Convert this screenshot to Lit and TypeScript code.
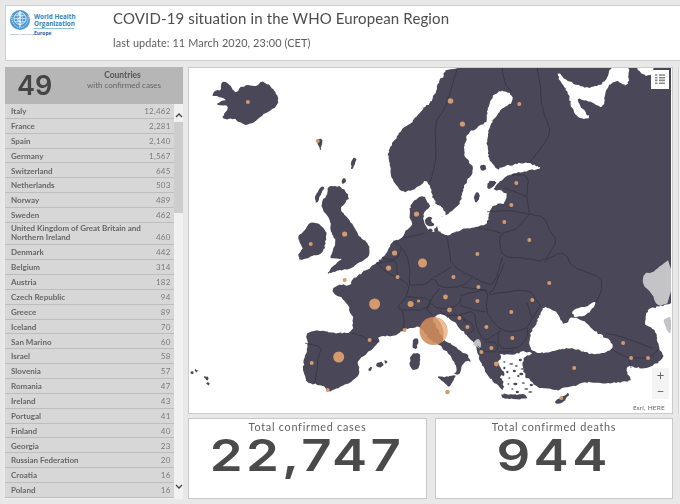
import { LitElement, html, css, svg } from "lit";
import { customElement } from "lit/decorators.js";

const ROWS: [string, string][] = [
  ["Italy", "12,462"], ["France", "2,281"], ["Spain", "2,140"], ["Germany", "1,567"],
  ["Switzerland", "645"], ["Netherlands", "503"], ["Norway", "489"], ["Sweden", "462"],
  ["United Kingdom of Great Britain and Northern Ireland", "460"], ["Denmark", "442"],
  ["Belgium", "314"], ["Austria", "182"], ["Czech Republic", "94"], ["Greece", "89"],
  ["Iceland", "70"], ["San Marino", "60"], ["Israel", "58"], ["Slovenia", "57"],
  ["Romania", "47"], ["Ireland", "43"], ["Portugal", "41"], ["Finland", "40"],
  ["Georgia", "23"], ["Russian Federation", "20"], ["Croatia", "16"], ["Poland", "16"],
];

type Pt = [number, number];

function parse(d: string): Pt[][] {
  return d
    .split("M")
    .filter((s) => s.trim())
    .map((s) => {
      const n = s.replace(/[LZ]/g, " ").trim().split(/[\s,]+/).map(Number);
      const pts: Pt[] = [];
      for (let i = 0; i + 1 < n.length; i += 2) pts.push([n[i], n[i + 1]]);
      return pts;
    });
}

function chaikin(pts: Pt[], closed: boolean): Pt[] {
  const out: Pt[] = [];
  const len = pts.length;
  if (!closed) out.push(pts[0]);
  for (let i = 0; i < (closed ? len : len - 1); i++) {
    const a = pts[i];
    const b = pts[(i + 1) % len];
    out.push([a[0] * 0.75 + b[0] * 0.25, a[1] * 0.75 + b[1] * 0.25]);
    out.push([a[0] * 0.25 + b[0] * 0.75, a[1] * 0.25 + b[1] * 0.75]);
  }
  if (!closed) out.push(pts[len - 1]);
  return out;
}

let seed = 12345;
function rnd() {
  seed = (seed * 16807) % 2147483647;
  return seed / 2147483647 - 0.5;
}

function rough(d: string, closed: boolean, amp: number, step: number): string {
  return parse(d)
    .map((poly) => {
      if (poly.length < 3) return "";
      const sm = chaikin(poly, closed);
      const out: string[] = [];
      const n = sm.length;
      for (let i = 0; i < (closed ? n : n - 1); i++) {
        const a = sm[i];
        const b = sm[(i + 1) % n];
        const l = Math.hypot(b[0] - a[0], b[1] - a[1]);
        const k = Math.max(1, Math.round(l / step));
        for (let j = 0; j < k; j++) {
          const t = j / k;
          const onEdge = Math.abs(a[0] - 672) < 0.01 || a[1] <= 68.01;
          const m = onEdge ? 0 : amp;
          out.push(
            `${(a[0] + (b[0] - a[0]) * t + rnd() * m).toFixed(1)},${(a[1] + (b[1] - a[1]) * t + rnd() * m).toFixed(1)}`
          );
        }
      }
      if (!closed) out.push(`${sm[n - 1][0]},${sm[n - 1][1]}`);
      return "M" + out.join(" L") + (closed ? "Z" : "");
    })
    .join(" ");
}

const LAND =
  "M447,68 L444,76 440,80 436,92 430,103 424,108 420,113 410,125 404,128 398,135 391,146 388,157 391,168 392,177 397,187 403,192 413,190 420,186 427,180 431,188 433,197 437,203 431,208 428,202 424,195 417,199 412,203 410,211 411,220 413,226 406,231 403,238 394,241 389,249 383,258 377,263 372,267 362,273 352,279 351,286 342,284 333,287 333,293 342,298 347,303 351,312 354,320 352,333 340,333 326,332 313,330 305,335 308,342 306,354 303,368 306,376 307,383 316,384 323,385 328,392 338,388 350,383 357,377 361,372 357,362 366,354 380,342 378,337 388,336 397,335 403,330 413,327 421,327 427,335 433,342 437,343 445,350 452,357 457,367 458,371 454,374 460,376 463,365 467,361 472,362 470,357 462,351 455,347 445,340 438,330 433,319 437,315 443,314 449,318 455,322 462,330 470,338 477,346 479,356 483,366 490,378 497,384 503,391 505,385 500,375 507,377 498,363 503,357 500,354 510,355 520,353 526,351 535,354 525,356 523,362 525,375 532,380 538,388 548,388 557,391 565,388 575,386 580,384 590,382 600,384 617,382 632,382 628,372 628,365 640,368 652,367 665,358 660,348 658,340 657,332 650,327 645,323 647,315 650,308 658,307 672,303 L672,303 672,303 672,200 672,68 672,68 600,68 500,68 Z";
const ISLANDS = [
  "M212,95 L216,90 221,91 222,81 228,83 232,88 236,94 240,87 245,86 250,85 256,87 262,80 266,84 270,85 275,91 278,97 278,104 275,108 268,112 263,115 256,121 248,125 240,123 233,118 223,120 223,115 228,109 226,105 215,105 222,101 227,100 221,97 213,96 Z",
  "M316,140 L320,138 323,140 322,145 320,151 319,146 Z",
  "M351,162 L354,157 357,159 355,165 352,171 Z",
  "M341,181 L345,177 347,181 343,185 Z",
  "M317,194 L322,186 325,187 321,194 317,204 315,197 Z",
  "M328,185 L343,187 350,197 345,204 340,209 344,214 348,218 354,226 360,237 367,242 371,249 368,258 358,263 353,268 343,270 333,272 327,274 332,268 337,263 343,258 335,259 330,258 333,251 337,240 332,235 331,228 330,218 324,212 322,207 322,200 327,197 Z",
  "M298,235 L304,232 309,223 316,222 327,230 326,240 325,248 321,254 310,257 300,261 298,255 303,249 301,245 Z",
  "M415,337 L419,340 417,350 412,347 Z",
  "M411,354 L420,352 421,362 419,370 410,369 Z",
  "M375,365 L381,361 385,365 380,368 Z M384,360 L388,361 386,364 Z M368,370 L372,366 372,371 Z",
  "M436,376 L448,377 457,374 453,382 450,388 444,382 Z",
  "M502,393 L515,395 526,394 528,399 515,399 503,399 Z",
  "M555,401 L563,397 571,392 567,399 562,404 557,404 Z",
  "M190,372 L194,371 193,375 Z M194,369 L198,370 196,373 Z M203,376 L209,377 207,381 Z M206,382 L210,383 208,386 Z",
];
const SEA = [
  "M497,92 L505,91 512,93 514,102 506,107 502,110 495,118 490,127 488,137 488,147 489,155 490,160 497,170 505,166 513,165 522,163 530,163 536,166 543,168 532,170 522,172 510,175 502,180 496,186 493,190 500,190 508,193 506,203 497,204 492,207 489,213 488,224 480,226 470,228 458,231 447,236 440,233 437,223 440,218 447,215 456,208 461,203 463,190 468,180 475,170 470,162 464,153 466,143 467,135 476,128 487,123 488,112 490,102 Z",
  "M438,202 L448,215 440,218 438,226 433,233 427,228 423,220 425,212 430,207 Z",
  "M557,72 L565,78 573,83 582,86 590,88 598,86 604,83 609,76 612,66 629,66 630,76 628,86 622,83 617,80 610,85 607,90 606,98 604,108 598,106 593,102 585,100 577,98 579,104 585,110 591,118 583,119 575,114 572,106 570,96 566,88 561,82 Z",
  "M636,66 L656,66 651,76 644,75 Z",
  "M530,340 L532,331 537,325 540,315 545,306 552,309 558,313 562,322 565,325 573,317 577,318 586,322 597,332 605,337 613,342 613,350 605,353 593,354 583,351 573,348 562,349 553,351 544,353 537,353 530,348 Z",
  "M573,310 L582,307 590,305 598,301 593,309 588,315 580,317 574,316 Z",
];
const DARK_SPECKS = [
  "M474,196 L478,191 481,197 476,204 Z",
  "M436,225 L431,221 433,217 428,217 425,221 428,227 Z",
  "M415,226 L422,223 426,228 420,232 Z",
  "M427,232 L431,228 434,231 430,234 Z",
  "M480,166 L486,164 487,170 482,171 Z",
  "M488,181 L498,181 494,187 488,190 Z",
];
const AEGEAN: Pt[] = [
  [510, 378], [515, 371], [512, 364], [519, 376], [524, 383], [516, 384], [505, 362], [521, 360],
  [531, 392], [508, 372], [523, 369], [528, 377], [513, 389], [518, 392], [527, 389], [505, 368],
  [517, 366], [522, 374], [509, 384], [532, 385],
];
const GRAY = [
  "M672,258 L660,267 653,273 645,273 643,285 653,293 658,307 672,302 Z",
  "M664,320 L668,318 672,316 672,334 668,331 666,325 Z",
  "M473,344 L478,338 482,342 481,349 477,347 Z",
];
const BORDERS = [
  "M458,68 L452,88 445,110 435,123 437,157 434,170 430,183",
  "M503,68 L505,83 513,93",
  "M538,68 L541,85 542,103 546,118 552,132 542,148 530,163",
  "M510,175 L530,175 527,197 530,213",
  "M505,188 L514,191 527,197",
  "M488,212 L510,210 530,214",
  "M530,214 L545,217 550,230 558,241 552,250 545,262 525,258 503,257 500,242 502,233 515,230 520,226 530,214",
  "M502,233 L490,230 478,228",
  "M447,235 L450,250 452,265 473,277 485,283 495,285 503,257",
  "M545,262 L555,255 565,252 573,267 590,273 602,278 603,290 597,302",
  "M505,263 L500,275 495,288 488,295 500,293 523,290 532,292 537,300 541,306",
  "M488,295 L487,312 494,322 502,330 515,332 528,328 533,318 541,306",
  "M502,330 L498,333 500,348 510,349 520,347 528,338 528,328",
  "M435,277 L444,272 452,267",
  "M473,277 L463,287 440,288 435,277 425,285 410,285",
  "M463,287 L475,289 487,290 488,295",
  "M462,295 L475,292 487,290",
  "M440,288 L435,295 430,302",
  "M462,295 L460,305 440,310 430,302 427,310",
  "M460,305 L475,310 487,312",
  "M460,315 L475,310 477,328 485,342 498,333",
  "M440,310 L445,316 460,315 468,324",
  "M460,315 L477,328 468,335",
  "M485,342 L498,342 498,352 485,352 478,346",
  "M498,352 L510,352 514,350",
  "M377,263 L390,275 398,277 410,285 407,297 397,308 403,310 405,322 403,330",
  "M407,297 L432,298 427,310 403,310",
  "M427,310 L430,312 433,315",
  "M377,263 L388,262 397,260 398,275",
  "M383,258 L397,260 403,248 394,241",
  "M403,248 L410,262 410,285",
  "M352,333 L362,336 370,340 380,342",
  "M305,343 L323,347 318,358 318,368 315,383",
  "M403,238 L414,236 425,233",
  "M533,318 L530,310 528,303",
  "M607,333 L620,336 637,342 653,348",
  "M612,349 L622,355 630,358 643,358 650,358 660,349",
  "M630,358 L631,363 632,368",
];
const DOTS: [number, number, number][] = [
  [248, 102, 2], [318, 141, 2], [451, 101, 2.8], [463, 124, 2.6], [520, 104, 2], [517, 183, 2],
  [512, 205, 2], [505, 222, 2], [530, 240, 2], [417, 214, 2.6], [345, 234, 2.6], [311, 244, 2],
  [395, 253, 2.6], [389, 268, 2.6], [398, 277, 2], [423, 263, 4.5], [411, 304, 3], [419, 301, 1.6],
  [375, 304, 5.5], [370, 340, 2], [339, 357, 5.5], [312, 363, 2], [345, 280, 2], [328, 390, 2],
  [405, 330, 2], [478, 254, 2], [454, 277, 2], [479, 287, 2], [478, 301, 2], [446, 297, 2.4],
  [450, 310, 2.4], [460, 318, 2], [468, 327, 2], [487, 327, 2], [512, 312, 2], [533, 300, 2],
  [550, 283, 2], [513, 338, 2], [492, 348, 2], [482, 352, 2], [497, 364, 2.4], [575, 368, 2],
  [562, 398, 2], [624, 343, 2], [632, 358, 2], [649, 358, 2], [448, 392, 2.2],
];

const mapSvg = svg`
  <svg class="map-svg" viewBox="189 68 484 345" preserveAspectRatio="none">
    <path d=${rough(LAND, true, 1.6, 2.2)} fill="#4a4759"></path>
    ${ISLANDS.map((d) => svg`<path d=${rough(d, true, 1.2, 2)} fill="#4a4759"></path>`)}
    ${SEA.map((d) => svg`<path d=${rough(d, true, 1.6, 2)} fill="#fff"></path>`)}
    ${DARK_SPECKS.map((d) => svg`<path d=${rough(d, true, 0.6, 2)} fill="#4a4759"></path>`)}
    ${AEGEAN.map(([x, y], i) => svg`<ellipse cx=${x} cy=${y} rx=${1.1 + (i % 3) * 0.5} ry=${0.8 + (i % 2) * 0.4} fill="#4a4759"></ellipse>`)}
    ${GRAY.map((d) => svg`<path d=${rough(d, true, 0.5, 3)} fill="#c4c4c6"></path>`)}
    ${BORDERS.map((d) => svg`<path d=${rough(d, false, 0.7, 3)} fill="none" stroke="#302e3c" stroke-width=".7"></path>`)}
    ${DOTS.map(([x, y, r]) => svg`<circle cx=${x} cy=${y} r=${r} fill="#d49a6c"></circle>`)}
    <circle cx="434" cy="331" r="14" fill="#cf8c5a" fill-opacity=".88"></circle>
    <path d="M436,317.5 A14,14 0 0 1 443,342 A22,22 0 0 0 436,317.5 Z" fill="#f0bd94"></path>
  </svg>`;

@customElement("app-root")
export class AppRoot extends LitElement {
  static styles = css`
    :host {
      display: block;
      width: 680px;
      height: 504px;
      overflow: hidden;
      background: #e8e8e8;
      font-family: "Lato", "Open Sans", sans-serif;
      color: #555;
    }
    .page {
      display: flex;
      flex-direction: column;
      gap: 6px;
      width: 690px;
      padding: 5px 0 0 5px;
      box-sizing: border-box;
      filter: blur(0.3px);
    }
    .header {
      display: flex;
      height: 56px;
      box-sizing: border-box;
      background: #fff;
      border: 1px solid #cfcfcf;
    }
    .logo { width: 107px; flex: none; }
    .logo svg { display: block; }
    .logo-t { font-family: "Open Sans", sans-serif; font-weight: 700; fill: #2f86b9; }
    .logo-e { fill: #2a5f96; }
    .logo-s { font-family: "Open Sans", sans-serif; font-size: 2.4px; fill: #3f7fae; }
    .heads { display: flex; flex-direction: column; }
    .title {
      margin-top: 2px;
      font-size: 15px;
      line-height: 20px;
      color: #4d4d4d;
      white-space: nowrap;
      letter-spacing: 0.13px;
    }
    .update {
      margin-top: 8px;
      font-size: 10.9px;
      line-height: 14px;
      color: #5d5d5d;
      white-space: nowrap;
      letter-spacing: 0.1px;
    }
    .body { display: flex; gap: 5px; }
    .left {
      flex: none;
      width: 178px;
      height: 432px;
      display: flex;
      flex-direction: column;
      background: #f1f1f1;
    }
    .summary {
      flex: none;
      height: 37px;
      display: flex;
      align-items: center;
      background: #b6b6b6;
    }
    .count {
      width: 82px;
      padding-left: 12px;
      box-sizing: border-box;
      font-family: "Inter", sans-serif;
      font-size: 27px;
      font-weight: 600;
      color: #454545;
      line-height: 36px;
    }
    .what {
      width: 71px;
      align-self: flex-start;
      padding-top: 4px;
      text-align: center;
      white-space: nowrap;
      font-size: 8px;
      line-height: 9.5px;
      color: #646464;
    }
    .what b { font-size: 8.5px; color: #555; }
    .list-wrap { flex: 1; display: flex; min-height: 0; }
    .rows { width: 169px; flex: none; }
    .row {
      display: flex;
      align-items: flex-end;
      justify-content: space-between;
      box-sizing: border-box;
      min-height: 14.87px;
      padding: 3px 3.5px 1.5px 6px;
      background: #d7d7d7;
      border-bottom: 1.2px solid #bdbdbd;
      font-size: 8px;
      line-height: 9.2px;
    }
    .name { font-weight: 700; color: #666; max-width: 135px; }
    .val { color: #7b7b7b; letter-spacing: 0.2px; }
    .row.tall { padding-top: 1px; padding-bottom: 2px; }
    .scroll {
      flex: 1;
      display: flex;
      flex-direction: column;
      align-items: center;
    }
    .thumb {
      width: 100%;
      height: 91px;
      background: #cdcdcd;
      margin-top: 4px;
    }
    .thumb-wrap { flex: 1; width: 100%; }
    .chev { display: block; flex: none; }
    .chev.up { margin-top: 8px; }
    .chev.down { margin-bottom: 9px; }
    .center {
      flex: none;
      width: 485px;
      display: flex;
      flex-direction: column;
      gap: 4px;
    }
    .map {
      position: relative;
      height: 347px;
      box-sizing: border-box;
      border: 1px solid #cbcbcb;
      background: #fff;
    }
    .map-svg { display: block; width: 483px; height: 345px; }
    .legend {
      position: absolute;
      top: 2px;
      right: 3px;
      width: 18px;
      height: 19px;
      background: #fff;
      display: flex;
      align-items: center;
      justify-content: center;
    }
    .zoom {
      position: absolute;
      top: 300px;
      right: 3px;
      width: 17px;
      height: 31px;
      background: #f4f4f4;
      display: flex;
      flex-direction: column;
      align-items: center;
      font-size: 13px;
      line-height: 15.5px;
      color: #666;
    }
    .credit {
      position: absolute;
      right: 7px;
      bottom: 1px;
      font-size: 6.5px;
      line-height: 9px;
      color: #666;
      letter-spacing: 0.2px;
    }
    .cards { display: flex; gap: 8px; height: 81px; }
    .card {
      flex: none;
      width: 239px;
      box-sizing: border-box;
      border: 1px solid #c8c8c8;
      background: #fff;
      text-align: center;
    }
    .card.b { width: 238px; }
    .card-t {
      font-size: 10.8px;
      line-height: 12px;
      margin-top: 2px;
      color: #606060;
      letter-spacing: 0.75px;
    }
    .card-n {
      display: inline-block;
      transform: scaleX(1.2);
      margin-top: 3px;
      font-family: "Inter", sans-serif;
      font-size: 44px;
      font-weight: 600;
      line-height: 38px;
      color: #4a4a4a;
      letter-spacing: 2.8px;
    }
    .edge {
      flex: none;
      width: 20px;
      height: 347px;
      box-sizing: border-box;
      background: #f2f2f2;
      border-left: 1px solid #d4d4d4;
    }
  `;

  render() {
    return html`
      <div class="page">
        <div class="header">
          <div class="logo">
            <svg width="86" height="40" viewBox="6 6 86 40">
              <circle cx="20" cy="20" r="10" fill="#4b97d3"></circle>
              <circle cx="20" cy="18.5" r="6" fill="none" stroke="#fff" stroke-width=".8"></circle>
              <ellipse cx="20" cy="18.5" rx="2.8" ry="6" fill="none" stroke="#fff" stroke-width=".5"></ellipse>
              <path d="M14,18.5 H26 M15,15.5 H25 M15,21.5 H25" stroke="#fff" stroke-width=".5" fill="none"></path>
              <path d="M20,11 V27" stroke="#fff" stroke-width="1.1"></path>
              <path d="M18,14 C22,15 22,17 19,18 C17,19 18,21 21,22" stroke="#fff" stroke-width=".9" fill="none"></path>
              <path d="M12,15 C11,21 14,27 20,28 C26,27 29,21 28,15" stroke="#d6e9f6" stroke-width="1" stroke-dasharray="1.2 .8" fill="none"></path>
              <text class="logo-t" x="34" y="18.5" font-size="6.3">World Health</text>
              <text class="logo-t" x="34" y="26" font-size="6.3">Organization</text>
              <path d="M34,28.5 H74" stroke="#5aa5d2" stroke-width=".7"></path>
              <text class="logo-t logo-e" x="34" y="35" font-size="5">Europe</text>
              <text class="logo-s" x="10" y="35">REGIONAL OFFICE FOR</text>
            </svg>
          </div>
          <div class="heads">
            <div class="title">COVID-19 situation in the WHO European Region</div>
            <div class="update">last update: 11 March 2020, 23:00 (CET)</div>
          </div>
        </div>
        <div class="body">
          <div class="left">
            <div class="summary">
              <div class="count">49</div>
              <div class="what"><b>Countries</b><br />with confirmed cases</div>
            </div>
            <div class="list-wrap">
              <div class="rows">
                ${ROWS.map(
                  ([n, v]) => html`<div class="row ${n.length > 30 ? "tall" : ""}">
                    <span class="name">${n}</span><span class="val">${v}</span>
                  </div>`
                )}
              </div>
              <div class="scroll">
                <svg class="chev up" width="8" height="6" viewBox="0 0 8 6"><path d="M1,5 L4,2 7,5" fill="none" stroke="#444" stroke-width="1.3"></path></svg>
                <div class="thumb-wrap"><div class="thumb"></div></div>
                <svg class="chev down" width="8" height="6" viewBox="0 0 8 6"><path d="M1,1 L4,4 7,1" fill="none" stroke="#444" stroke-width="1.3"></path></svg>
              </div>
            </div>
          </div>
          <div class="center">
            <div class="map">
              ${mapSvg}
              <div class="legend">
                <svg width="10" height="11" viewBox="0 0 10 11">
                  <path d="M0,1 H2.5 M0,3.7 H2.5 M0,6.4 H2.5 M0,9.2 H2.5 M4,1 H10 M4,3.7 H10 M4,6.4 H10 M4,9.2 H10" stroke="#8a8a8a" stroke-width="1.6" fill="none"></path>
                </svg>
              </div>
              <div class="zoom"><span>+</span><span>−</span></div>
              <div class="credit">Esri, HERE</div>
            </div>
            <div class="cards">
              <div class="card">
                <div class="card-t">Total confirmed cases</div>
                <div class="card-n">22,747</div>
              </div>
              <div class="card b">
                <div class="card-t">Total confirmed deaths</div>
                <div class="card-n">944</div>
              </div>
            </div>
          </div>
          <div class="edge"></div>
        </div>
      </div>
    `;
  }
}
